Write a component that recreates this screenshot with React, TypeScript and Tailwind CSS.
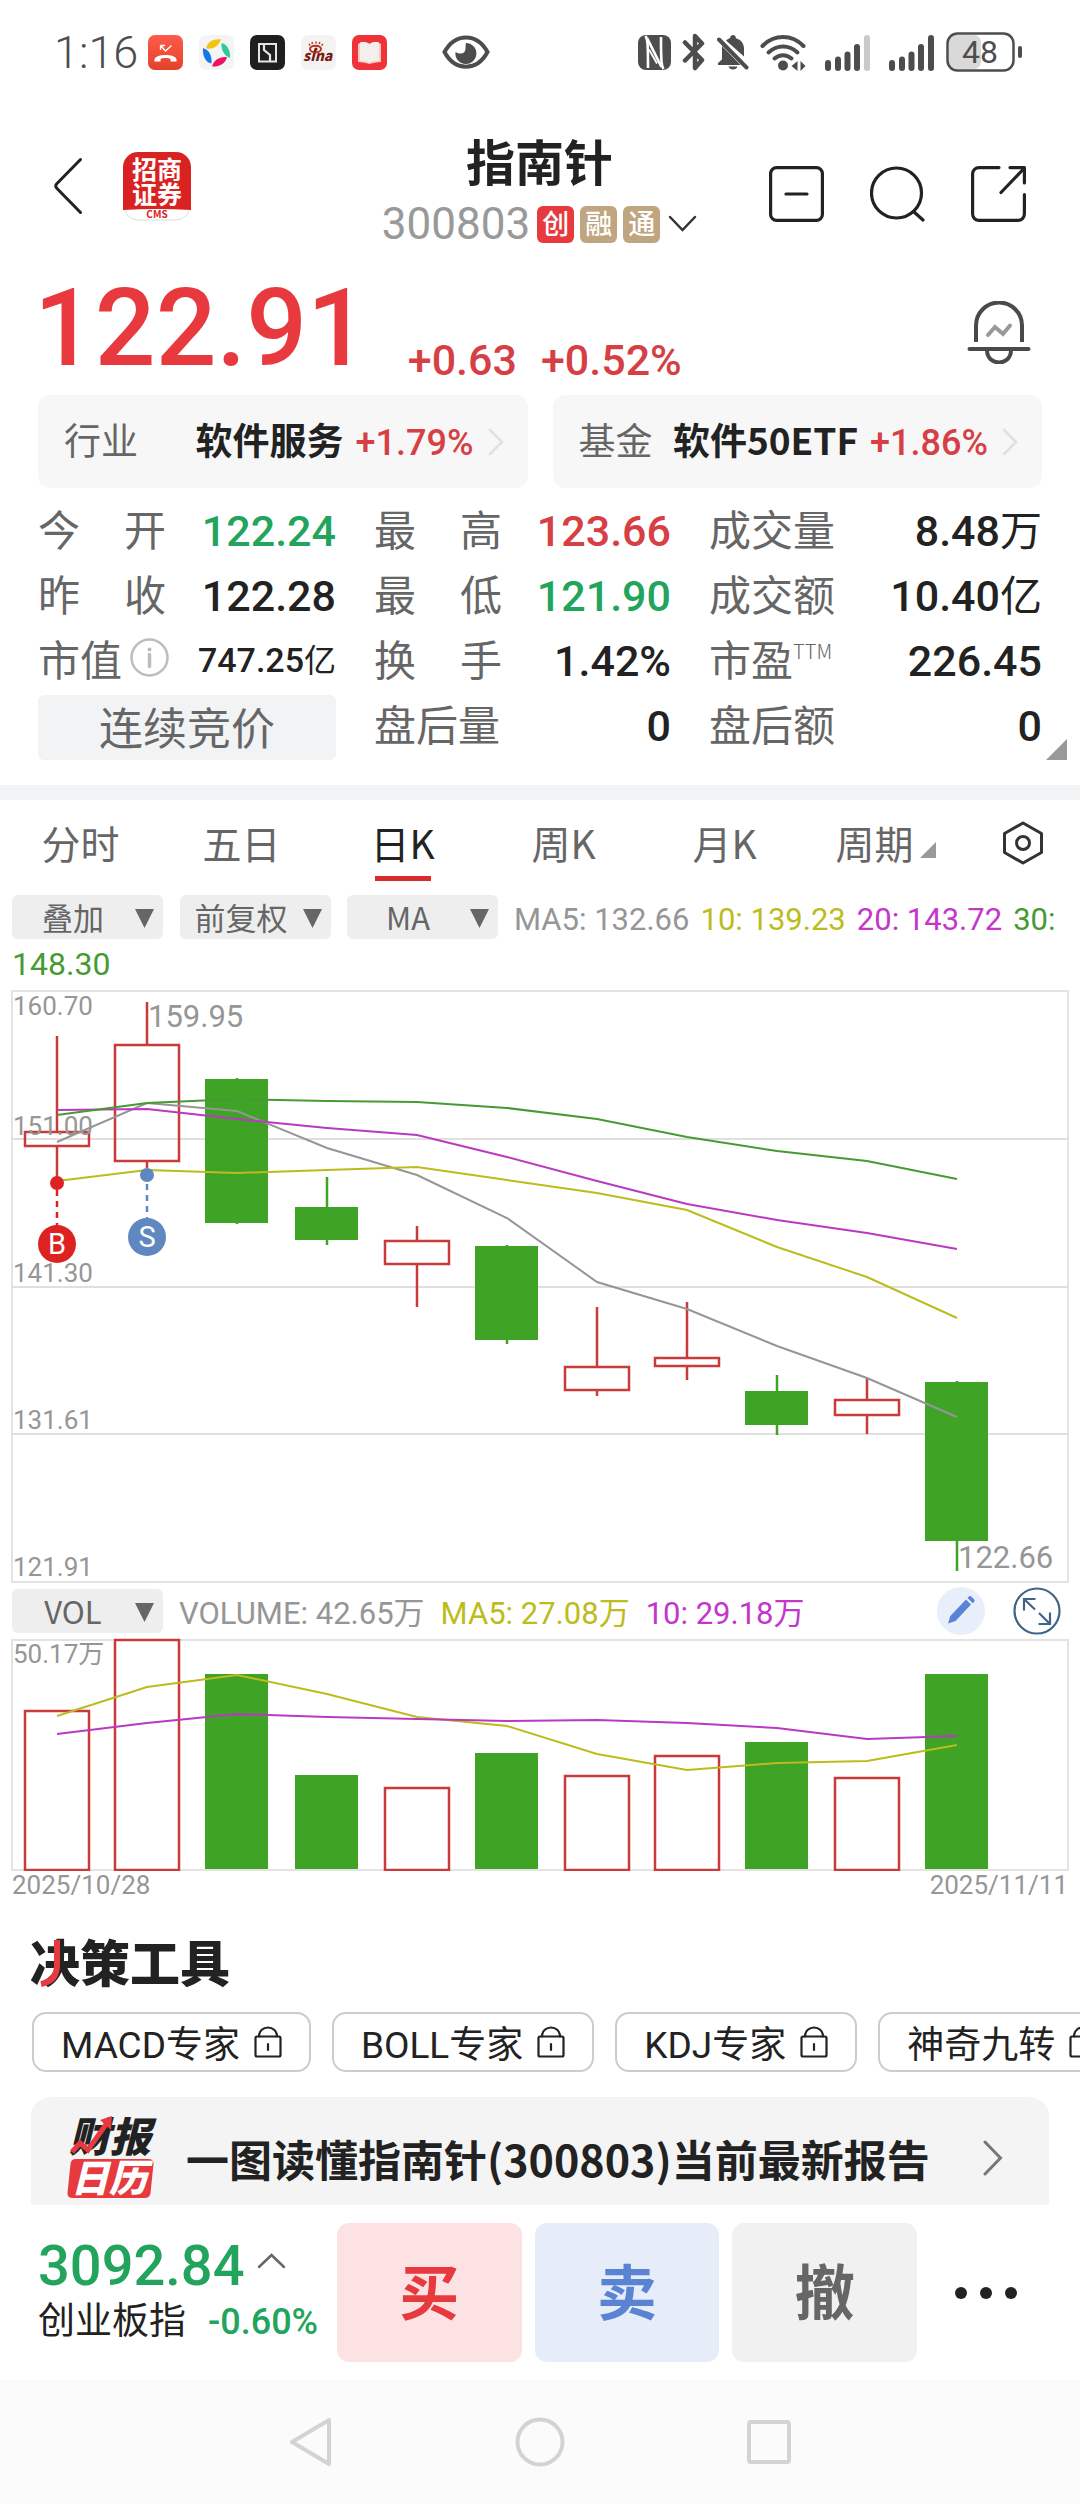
import React from "react";

const RED = "#c93a3a";
const GREEN = "#3fa326";

/* Latin digits set in Roboto on the baseline of the surrounding text. */
function N({ children }: { children: React.ReactNode }) {
  return <span className="font-[family-name:Roboto,'Noto_Sans_CJK_SC',sans-serif] leading-[0]">{children}</span>;
}

/* ---------- status bar ---------- */

function MissedCallIcon() {
  return (
    <svg width="35" height="35" viewBox="0 0 35 35" fill="none">
      <defs>
        <linearGradient id="call" x1="0" y1="0" x2="0" y2="1">
          <stop offset="0" stopColor="#ff5a4a" />
          <stop offset="1" stopColor="#e2432b" />
        </linearGradient>
      </defs>
      <rect width="35" height="35" rx="7" fill="url(#call)" />
      <path d="M12.5 10.5v4.5M12.5 10.5h4.500M13 11l4.500 5 6-5.500" stroke="#fff" strokeWidth="1.300" />
      <path d="M6.500 26.500v-2.200c1.500-5.600 20.500-5.600 22 0v2.200h-6v-2.500c-2.500-1.300-7.500-1.300-10 0v2.500z" fill="#fff" />
    </svg>
  );
}

function PinwheelIcon() {
  return (
    <svg width="35" height="35" viewBox="0 0 35 35">
      <rect width="35" height="35" rx="7" fill="#f4f4f5" />
      <path d="M7 13.500C9 6 15 3.500 22 4.500 20 10 16 14.500 7 13.500z" fill="#f2c40f" />
      <path d="M22.500 8c6.500 1.500 9 8.500 8.500 15C26 21 22 16 22.500 8z" fill="#2fc99b" />
      <path d="M28 22c-1.500 7-8.500 10-15 9.500C14.500 26 19 21.500 28 22z" fill="#ee1166" />
      <path d="M4 13c6 2 9 7 8.500 15.500C5.500 27 3.500 20 4 13z" fill="#1277e8" />
    </svg>
  );
}

function GateIcon() {
  return (
    <svg width="35" height="35" viewBox="0 0 35 35" fill="none">
      <rect width="35" height="35" rx="7" fill="#1f1f1f" />
      <rect x="9" y="9" width="17" height="17.500" stroke="#e6e6e6" strokeWidth="2" />
      <path d="M14 9v6l6 5v6.500" stroke="#e6e6e6" strokeWidth="2.200" />
    </svg>
  );
}

function SinaIcon() {
  return (
    <svg width="35" height="35" viewBox="0 0 35 35" fill="none">
      <rect width="35" height="35" rx="7" fill="#f3f3f3" />
      <ellipse cx="14.500" cy="14" rx="5.500" ry="3.300" stroke="#b5321f" strokeWidth="2" />
      <circle cx="15" cy="14" r="1.600" fill="#7a1d14" />
      <path d="M9 10.500l-1-1.500M11.500 9l-.5-2M15 8.500V6.500M18 9l1-2M20.500 10.500l1.500-1.500" stroke="#c23a25" strokeWidth="1.500" />
      <text x="2" y="26" fontSize="14" fontWeight="900" fontStyle="italic" fill="#7a1d14">sina</text>
    </svg>
  );
}

function BookIcon() {
  return (
    <svg width="35" height="35" viewBox="0 0 35 35">
      <rect width="35" height="35" rx="7" fill="#ee3438" />
      <path d="M6 9c4-2.500 8-2 11.500 0C21 7 25 6.500 29 9v18c-4 .5-8 .5-11.500 2-3.500-1.500-7.500-1.500-11.500-2z" fill="#f8c9c6" />
      <path d="M8 7.500c3.500-1 6.500-.5 9.500 1.500 3-2 6-2.500 9.500-1.500V26c-3.500 0-6.500.3-9.500 1.500C14.500 26.300 11.500 26 8 26z" fill="#f3efec" />
    </svg>
  );
}

function EyeIcon() {
  return (
    <svg width="48" height="34" viewBox="0 0 48 34" fill="none">
      <path d="M2.500 17C13-2.500 35-2.500 45.500 17 35 36.500 13 36.500 2.500 17z" stroke="#4d4d4d" strokeWidth="4" />
      <path d="M24 8a10.500 10.500 0 1 1-10.500 9c2 1.500 7.500 3 9.500-1 1.200-2.500 0-5 1-8z" fill="#4d4d4d" />
    </svg>
  );
}

function NfcIcon() {
  return (
    <svg width="33" height="35" viewBox="0 0 33 35" fill="none">
      <rect width="33" height="35" rx="8" fill="#4d4d4d" />
      <path d="M7.500 1C9.500 4 10 8 10 33M25.500 34C23.500 31 23 27 23 2" stroke="#fff" strokeWidth="2.600" />
      <path d="M9 3l14.500 29" stroke="#fff" strokeWidth="2.600" />
      <path d="M11 14.500l8 14" stroke="#fff" strokeWidth="1.800" />
    </svg>
  );
}

function BluetoothIcon() {
  return (
    <svg width="24" height="38" viewBox="0 0 24 38" fill="none" stroke="#4d4d4d" strokeWidth="4.500" strokeLinecap="round" strokeLinejoin="round">
      <path d="M3 9.500L20 27l-7 8V3l7 7.500L3 27.500" />
    </svg>
  );
}

function MutedBellIcon() {
  return (
    <svg width="32" height="36" viewBox="0 0 32 36">
      <path d="M5 12l18.500 19H1v-2l4-3.500V12zM9 6.500c1-1 2.500-2 4-2.300C13.300 2 14.500 1 16 1s2.700 1 3 3.200c5 1.500 8 5.300 8 10.300v8L9 6.500z" fill="#4d4d4d" />
      <path d="M11.500 32.500h9c-1 4-8 4-9 0z" fill="#4d4d4d" />
      <path d="M2 5.500l27.500 28" stroke="#4d4d4d" strokeWidth="4" strokeLinecap="round" />
    </svg>
  );
}

function WifiIcon() {
  return (
    <svg width="46" height="37" viewBox="0 0 46 37" fill="none">
      <g stroke="#4d4d4d" strokeWidth="4" strokeLinecap="round">
        <path d="M2.500 12C14 0 32 0 43.500 12" />
        <path d="M8.500 18.500c8.500-8 20.500-8 29 0" />
        <path d="M14.500 24.500c5-4.500 12-4.500 17 0" />
      </g>
      <circle cx="23" cy="31.500" r="5" fill="#4d4d4d" />
      <path d="M31.500 32l6-5v10zM45.500 32l-5-5v10z" fill="#4d4d4d" />
    </svg>
  );
}

function SignalIcon({ last }: { last: string }) {
  return (
    <svg width="46" height="37" viewBox="0 0 46 37" fill="#4d4d4d">
      <rect x="0" y="26" width="6" height="11" rx="3" />
      <rect x="10" y="22.500" width="6" height="14.500" rx="3" />
      <rect x="19.500" y="17.500" width="6" height="19.500" rx="3" />
      <rect x="29" y="10" width="6" height="27" rx="3" />
      <rect x="39" y="1" width="6" height="36" rx="3" fill={last} />
    </svg>
  );
}

function BatteryIcon() {
  return (
    <svg className="overflow-visible font-[family-name:Roboto,sans-serif]" width="78" height="40" viewBox="0 0 78 40" fill="none">
      <rect x="3" y="3" width="32" height="34" rx="7" fill="#d9d9d9" />
      <rect x="1.500" y="1.500" width="66" height="37" rx="10" stroke="#4d4d4d" strokeWidth="2.500" />
      <rect x="72" y="14" width="4" height="12" rx="2" fill="#4d4d4d" />
      <text x="34" y="31" textAnchor="middle" fontSize="32" fill="#4d4d4d">48</text>
    </svg>
  );
}

function StatusBar() {
  return (
    <div className="flex h-[104px] items-center pr-[56px] pl-[54px] text-[#4d4d4d]">
      <span className="w-[94px] font-[family-name:Roboto,sans-serif] text-[45px] leading-none font-light">1:16</span>
      <div className="flex gap-4">
        <MissedCallIcon />
        <PinwheelIcon />
        <GateIcon />
        <SinaIcon />
        <BookIcon />
      </div>
      <div className="ml-[55px]"><EyeIcon /></div>
      <div className="ml-auto flex items-center gap-[11px]">
        <NfcIcon />
        <BluetoothIcon />
        <MutedBellIcon />
        <WifiIcon />
        <div className="ml-2 flex gap-[18px]">
          <SignalIcon last="#c9c9c9" />
          <SignalIcon last="#4d4d4d" />
        </div>
        <BatteryIcon />
      </div>
    </div>
  );
}

/* ---------- header ---------- */

function BrokerLogo() {
  return (
    <svg className="overflow-visible" width="68" height="69" viewBox="0 0 68 69">
      <rect x="1" y="1" width="66" height="67" rx="14" fill="#fff" stroke="#ddd" />
      <path d="M0 58V15A15 15 0 0 1 15 0h38a15 15 0 0 1 15 15v43q-34-2-68 0z" fill="#d92322" />
      <text x="34" y="27" textAnchor="middle" fontSize="25" fontWeight="700" fill="#fff">招商</text>
      <text x="34" y="52" textAnchor="middle" fontSize="25" fontWeight="700" fill="#fff">证券</text>
      <text x="34" y="66" textAnchor="middle" fontSize="10" fontWeight="700" fill="#d92322">CMS</text>
    </svg>
  );
}

function Header() {
  return (
    <header className="grid grid-cols-[1fr_auto_1fr] pt-[26px] pr-[54px] pl-[53px]">
      <div className="flex items-center gap-10 pb-4">
        <button aria-label="返回">
          <svg width="30" height="58" viewBox="0 0 30 58" fill="none" stroke="#222" strokeWidth="3" strokeLinecap="round">
            <path d="M27.500 2.500L4 26.500q-2.500 2.500 0 5l23.500 24" />
          </svg>
        </button>
        <BrokerLogo />
      </div>
      <div className="flex flex-col items-center">
        <h1 className="text-[49px] leading-[60px] font-bold text-[#222]">指南针</h1>
        <button className="flex h-[68px] items-center gap-[6px]">
          <span className="mr-px font-[family-name:Roboto,sans-serif] text-[44px] leading-none text-[#999]">300803</span>
          <span className="h-[37px] w-[37px] rounded-md bg-[#e63a3f] text-center text-[27px] leading-[34px] font-medium text-white">创</span>
          <span className="h-[37px] w-[37px] rounded-md bg-[#bfa580] text-center text-[27px] leading-[34px] font-medium text-white">融</span>
          <span className="h-[37px] w-[37px] rounded-md bg-[#bfa580] text-center text-[27px] leading-[34px] font-medium text-white">通</span>
          <svg className="ml-[2px]" width="29" height="18" viewBox="0 0 29 18" fill="none" stroke="#333" strokeWidth="2.500" strokeLinecap="round">
            <path d="M2 2l12.500 13L27 2" />
          </svg>
        </button>
      </div>
      <div className="flex items-center justify-end gap-[46px]">
        <button aria-label="移除自选">
          <svg width="55" height="56" viewBox="0 0 55 56" fill="none" stroke="#222" strokeWidth="3.200" strokeLinecap="round">
            <rect x="1.600" y="1.600" width="51.800" height="52.800" rx="6" />
            <path d="M17 28h21" />
          </svg>
        </button>
        <button aria-label="搜索">
          <svg width="55" height="56" viewBox="0 0 55 56" fill="none" stroke="#222" strokeWidth="3.200" strokeLinecap="round">
            <circle cx="26.500" cy="27" r="25" />
            <path d="M43.500 45.500l9.500 8.500" />
          </svg>
        </button>
        <button aria-label="分享">
          <svg width="55" height="56" viewBox="0 0 55 56" fill="none" stroke="#222" strokeWidth="3.200" strokeLinecap="round" strokeLinejoin="round">
            <path d="M28 1.600H8a6.400 6.400 0 0 0-6.400 6.400v40a6.400 6.400 0 0 0 6.400 6.400h39a6.400 6.400 0 0 0 6.400-6.400V28.500M39 1.600h14.400V17M52.500 3L30 26.500" />
          </svg>
        </button>
      </div>
    </header>
  );
}

function PriceRow() {
  return (
    <section className="flex items-end pr-[49px] pl-[34px]">
      <span className="text-[107px] leading-[122px] font-medium text-[#e8393f]"><N>122.91</N></span>
      <span className="ml-10 text-[43px] leading-[48px] font-medium text-[#d64045]"><N>+0.63</N></span>
      <span className="ml-6 text-[43px] leading-[48px] font-medium text-[#d64045]"><N>+0.52%</N></span>
      <button className="mb-4 ml-auto" aria-label="股价提醒">
        <svg width="64" height="63" viewBox="0 0 64 63" fill="none" stroke="#4a4a4a" strokeWidth="4" strokeLinecap="round">
          <path d="M9 41V24.500a23 23 0 0 1 46 0V41" strokeLinecap="butt" />
          <path d="M2.500 48h59" />
          <path d="M20 49.500c.5 16 23.500 16 24 0" />
          <path d="M21 34l7-8 8 7 7-8.500" stroke="#999" />
        </svg>
      </button>
    </section>
  );
}

function Chevron() {
  return (
    <svg width="16" height="28" viewBox="0 0 16 28" fill="none" stroke="#e0e0e0" strokeWidth="2.500" strokeLinecap="round">
      <path d="M2 2l12 12L2 26" />
    </svg>
  );
}

function SectorCard({ label, name, change }: { label: string; name: string; change: string }) {
  return (
    <a href="#sector" className="flex h-[93px] items-center rounded-xl bg-[#f7f7f7] pr-6 pb-[6px] pl-[26px] whitespace-nowrap">
      <span className="text-[37px] leading-[54px] text-[#666]">{label}</span>
      <span className="ml-auto text-[37px] leading-[54px] font-bold text-[#222]">{name}</span>
      <span className="ml-3 text-[36px] leading-[54px] font-medium text-[#d64045]"><N>{change}</N></span>
      <span className="mt-[6px] ml-[14px]"><Chevron /></span>
    </a>
  );
}

type StatProps = { label: React.ReactNode; value: string; unit?: string; tone?: string; small?: boolean };

function Stat({ label, value, unit, tone = "text-[#222]", small = false }: StatProps) {
  return (
    <div className={`${tone} flex h-[65px] items-center justify-between whitespace-nowrap`}>
      <dt className="flex w-[128px] items-center justify-between text-[42px] leading-none text-[#666]">{label}</dt>
      <dd className={small ? "text-[34px] leading-none font-medium" : "text-[43px] leading-none font-medium"}>
        <N>{value}</N>
        {unit && <span className={small ? "text-[32px] leading-[0] font-normal" : "text-[42px] leading-[0] font-normal"}>{unit}</span>}
      </dd>
    </div>
  );
}

function Spread({ text }: { text: string }) {
  return (
    <>
      {text.split("").map((c, i) => (
        <span key={i}>{c}</span>
      ))}
    </>
  );
}

function Stats() {
  return (
    <section className="relative mt-[7px] px-[38px] pb-[25px]">
      <dl className="grid grid-cols-[298fr_297fr_333fr] items-start gap-x-[38px]">
        <Stat label={<Spread text="今开" />} value="122.24" tone="text-[#22a45d]" />
        <Stat label={<Spread text="最高" />} value="123.66" tone="text-[#d64045]" />
        <Stat label="成交量" value="8.48" unit="万" />
        <Stat label={<Spread text="昨收" />} value="122.28" />
        <Stat label={<Spread text="最低" />} value="121.90" tone="text-[#22a45d]" />
        <Stat label="成交额" value="10.40" unit="亿" />
        <Stat
          label={
            <>
              市值
              <svg className="ml-2 shrink-0" width="39" height="39" viewBox="0 0 39 39" fill="none" stroke="#bdbdbd">
                <circle cx="19.500" cy="19.500" r="18" strokeWidth="2.500" />
                <path d="M19.500 16.500V28.500" strokeWidth="3.500" strokeLinecap="round" />
                <circle cx="19.500" cy="11.500" r="2" fill="#bdbdbd" stroke="none" />
              </svg>
            </>
          }
          value="747.25"
          unit="亿"
          small
        />
        <Stat label={<Spread text="换手" />} value="1.42%" />
        <Stat
          label={
            <span className="flex">
              市盈<span className="text-[20px] leading-[28px] font-light">TTM</span>
            </span>
          }
          value="226.45"
        />
        <div className="mt-[5px] h-[65px] rounded-md bg-[#f2f3f5] text-center text-[44px] leading-[62px] text-[#666]">连续竞价</div>
        <Stat label="盘后量" value="0" />
        <Stat label="盘后额" value="0" />
      </dl>
      <svg className="absolute right-[13px] bottom-[25px]" width="21" height="21" viewBox="0 0 21 21">
        <path d="M21 0v21H0z" fill="#999" />
      </svg>
    </section>
  );
}

/* ---------- chart ---------- */

function PeriodTabs() {
  const tabs = ["分时", "五日", "日K", "周K", "月K"];
  return (
    <nav className="flex h-[81px] items-center text-[39px] leading-none text-[#666]">
      {tabs.map((t) => (
        <button key={t} className={t === "日K" ? "relative h-full flex-1 pt-[3px] text-[#222]" : "relative h-full flex-1 pt-[3px]"}>
          {t}
          {t === "日K" && <span className="absolute bottom-0 left-1/2 h-[5px] w-14 -translate-x-1/2 bg-[#d92b2b]" />}
        </button>
      ))}
      <button className="flex h-full flex-1 items-center justify-center gap-[6px] pt-[3px]">
        周期
        <svg className="mt-4" width="16" height="16" viewBox="0 0 16 16">
          <path d="M16 0v16H0z" fill="#999" />
        </svg>
      </button>
      <button className="flex h-full w-[114px] items-center justify-center pt-[5px]" aria-label="图表设置">
        <svg width="42" height="44" viewBox="0 0 42 44" fill="none" stroke="#333" strokeWidth="3" strokeLinejoin="round">
          <path d="M21 2l18.500 10.500v19L21 42 2.500 31.500v-19z" />
          <circle cx="21" cy="22" r="6.500" />
        </svg>
      </button>
    </nav>
  );
}

function Picker({ label, value }: { label: string; value: string }) {
  return (
    <div className="relative h-11 w-[151px] shrink-0">
      <select aria-label={label} defaultValue={value} className="h-11 w-full appearance-none rounded-md bg-[#eee] pr-[29px] text-center text-[31px] leading-[44px] text-[#666]">
        <option value={value}>{value}</option>
      </select>
      <svg className="pointer-events-none absolute top-[14px] right-[9px]" width="19" height="19" viewBox="0 0 19 19">
        <path d="M0 0h19l-9.500 19z" fill="#666" />
      </svg>
    </div>
  );
}

type Candle = { up: boolean; high: number; top: number; bottom: number; low: number };

const candles: Candle[] = [
  { up: true, high: 46, top: 142, bottom: 156, low: 193 },
  { up: true, high: 12, top: 55, bottom: 171, low: 178 },
  { up: false, high: 88, top: 89, bottom: 233, low: 234 },
  { up: false, high: 187, top: 217, bottom: 250, low: 255 },
  { up: true, high: 236, top: 251, bottom: 274, low: 317 },
  { up: false, high: 255, top: 256, bottom: 350, low: 354 },
  { up: true, high: 317, top: 377, bottom: 400, low: 406 },
  { up: true, high: 312, top: 368, bottom: 376, low: 390 },
  { up: false, high: 385, top: 401, bottom: 435, low: 445 },
  { up: true, high: 388, top: 410, bottom: 425, low: 444 },
  { up: false, high: 391, top: 392, bottom: 551, low: 581 },
];

const priceLines = [
  { color: "#969696", y: [152, 113, 121, 158, 185, 228, 292, 319, 356, 388, 427] },
  { color: "#bcbc1c", y: [191, 180, 183, 180, 177, 190, 203, 220, 257, 287, 328] },
  { color: "#b93ac0", y: [120, 119, 129, 138, 145, 167, 191, 214, 230, 243, 259] },
  { color: "#479a33", y: [125, 113, 109, 111, 112, 118, 129, 147, 161, 171, 189] },
];

const volumes = [71, 0, 34, 135, 148, 113, 136, 116, 102, 138, 34];

const volumeLines = [
  { color: "#bcbc1c", y: [76, 47, 35, 54, 77, 86, 114, 130, 123, 121, 105] },
  { color: "#b93ac0", y: [94, 83, 74, 77, 79, 81, 80, 83, 88, 99, 96] },
];

const cx = (i: number) => 57 + i * 90;

function Line({ color, y }: { color: string; y: number[] }) {
  return <polyline points={y.map((v, i) => `${cx(i)},${v}`).join(" ")} fill="none" stroke={color} strokeWidth="2" />;
}

function PriceChart() {
  return (
    <svg className="block w-full font-[family-name:Roboto,'Noto_Sans_CJK_SC',sans-serif]" viewBox="0 -9 1080 608">
      <rect x="12" y="1" width="1056" height="591" fill="none" stroke="#e3e3e3" strokeWidth="2" />
      {[149, 297, 444].map((y) => (
        <path key={y} d={`M12 ${y}H1068`} stroke="#d6d6d6" strokeWidth="1.500" />
      ))}
      {candles.map((c, i) =>
        c.up ? (
          <g key={i} stroke={RED} fill="none">
            <path d={`M${cx(i)} ${c.high}V${c.top}M${cx(i)} ${c.bottom}V${c.low}`} strokeWidth="2.500" />
            <rect x={cx(i) - 32} y={c.top} width="64" height={c.bottom - c.top} strokeWidth="2.500" />
          </g>
        ) : (
          <g key={i}>
            <path d={`M${cx(i)} ${c.high}V${c.low}`} stroke={GREEN} strokeWidth="2.500" />
            <rect x={cx(i) - 32} y={c.top} width="63" height={c.bottom - c.top} fill={GREEN} />
          </g>
        )
      )}
      {priceLines.map((l) => (
        <Line key={l.color} {...l} />
      ))}
      <g fill="#969696" fontSize="26">
        <text x="13" y="25">160.70</text>
        <text x="13" y="145">151.00</text>
        <text x="13" y="292">141.30</text>
        <text x="13" y="439">131.61</text>
        <text x="13" y="586">121.91</text>
      </g>
      <g fill="#969696" fontSize="31">
        <text x="148" y="37">159.95</text>
        <text x="958" y="578">122.66</text>
      </g>
      <path d="M57 200V236" stroke="#dd2222" strokeWidth="2.500" strokeDasharray="6 5" />
      <circle cx="57" cy="193" r="7" fill="#dd2222" />
      <circle cx="57" cy="254" r="19" fill="#dd2222" />
      <text x="57" y="264" textAnchor="middle" fontSize="29" fill="#fff">B</text>
      <path d="M147 194V228" stroke="#5f87c0" strokeWidth="2.500" strokeDasharray="6 5" />
      <circle cx="147" cy="185" r="7" fill="#5f87c0" />
      <circle cx="147" cy="247" r="19" fill="#5f87c0" />
      <text x="147" y="257" textAnchor="middle" fontSize="29" fill="#fff">S</text>
    </svg>
  );
}

function VolumeChart() {
  return (
    <svg className="block w-full font-[family-name:Roboto,'Noto_Sans_CJK_SC',sans-serif]" viewBox="0 -7 1080 238">
      <rect x="12" y="0" width="1056" height="230" fill="none" stroke="#e3e3e3" strokeWidth="2" />
      {volumes.map((top, i) =>
        candles[i].up ? (
          <rect key={i} x={cx(i) - 32} y={top} width="64" height={230 - top} fill="none" stroke={RED} strokeWidth="2.500" />
        ) : (
          <rect key={i} x={cx(i) - 32} y={top} width="63" height={229 - top} fill={GREEN} />
        )
      )}
      {volumeLines.map((l) => (
        <Line key={l.color} {...l} />
      ))}
      <text x="13" y="23" fontSize="26" fill="#969696">50.17万</text>
    </svg>
  );
}

function ChartSection() {
  return (
    <section>
      <div className="mt-[14px] flex items-center pl-3 text-[31px] leading-[44px] whitespace-nowrap">
        <Picker label="叠加" value="叠加" />
        <div className="ml-[17px]"><Picker label="复权方式" value="前复权" /></div>
        <div className="ml-4"><Picker label="主图指标" value="MA" /></div>
        <div className="ml-4 flex gap-[11px]">
          <span className="text-[#969696]"><N>MA5: 132.66</N></span>
          <span className="text-[#bcbc1c]"><N>10: 139.23</N></span>
          <span className="text-[#c437c9]"><N>20: 143.72</N></span>
          <span className="text-[#479a33]"><N>30:</N></span>
        </div>
      </div>
      <div className="mt-[2px] pl-3 text-[32px] leading-[40px] text-[#479a33]"><N>148.30</N></div>
      <PriceChart />
      <div className="flex h-11 items-center pr-[19px] pl-3 text-[31px] leading-[44px] whitespace-nowrap">
        <Picker label="副图指标" value="VOL" />
        <div className="ml-4 flex gap-4">
          <span className="text-[#969696]"><N>VOLUME: 42.65万</N></span>
          <span className="text-[#bcbc1c]"><N>MA5: 27.08万</N></span>
          <span className="text-[#c437c9]"><N>10: 29.18万</N></span>
        </div>
        <button className="ml-auto" aria-label="画线">
          <svg width="48" height="48" viewBox="0 0 48 48">
            <circle cx="24" cy="24" r="24" fill="#e9effa" />
            <path d="M11 36.500l2.300-7.500L29 12.500l5 5L18.500 34zM30.500 11l1.200-1.300c.8-.8 2-.8 2.800 0l2.500 2.500c.8.8.8 2 0 2.800L35.800 16.300z" fill="#5a82d6" />
          </svg>
        </button>
        <button className="ml-7" aria-label="全屏">
          <svg width="48" height="48" viewBox="0 0 48 48" fill="none" stroke="#3f6488" strokeWidth="2.200">
            <circle cx="24" cy="24" r="22.500" />
            <path d="M22.500 12H11v11.500M11 12l11 10.500M26 26l10.500 10.500M25.500 37H37V25.500" />
          </svg>
        </button>
      </div>
      <VolumeChart />
      <div className="flex justify-between px-3 text-[26px] leading-6 text-[#969696]">
        <span><N>2025/10/28</N></span>
        <span><N>2025/11/11</N></span>
      </div>
    </section>
  );
}

/* ---------- tools ---------- */

function LockIcon() {
  return (
    <svg width="28" height="32" viewBox="0 0 28 32" fill="none" stroke="#222" strokeWidth="2.200" strokeLinecap="round">
      <rect x="1.500" y="10.500" width="25" height="20" rx="1.500" />
      <path d="M5 10.500c0-12 18-12 18 0" />
      <path d="M14 18v6" />
    </svg>
  );
}

function Tools() {
  return (
    <section className="mt-[35px]">
      <h2 className="relative ml-[30px] w-fit text-[50px] leading-[60px] font-black text-[#222]">
        决策工具
        <svg className="absolute top-[9px] left-0" width="50" height="50" viewBox="0 0 50 50" fill="none">
          <path d="M27 1v25q0 16-16 19" stroke="#e63a3f" strokeWidth="6" />
        </svg>
      </h2>
      <div className="mt-[22px] flex gap-[21px] overflow-hidden pl-8">
        {["MACD专家", "BOLL专家", "KDJ专家", "神奇九转"].map((t) => (
          <button key={t} className="flex h-[60px] shrink-0 items-center gap-[14px] rounded-[14px] border-2 border-[#ccc] px-[27px] text-[37px] leading-[56px] text-[#222]">
            <span><N>{t}</N></span>
            <LockIcon />
          </button>
        ))}
      </div>
      <a href="#report" className="mx-[31px] mt-[25px] flex h-[108px] items-center rounded-t-[20px] bg-[#f4f4f4] pt-[13px] pr-[46px] pl-[36px]">
        <svg className="overflow-visible" width="90" height="84" viewBox="0 0 90 84" fill="none">
          <g fontStyle="italic" fontWeight="900">
            <text x="2" y="36" fontSize="41" fill="#222">财报</text>
            <path d="M9 43h72q6 0 5.500 5l-3 29q-.5 5-6 5H6q-6 0-5.500-5L3.500 48q.5-5 5.500-5z" fill="#e63a3f" />
            <text x="4" y="76" fontSize="38" fill="#fff">日历</text>
          </g>
          <path d="M5 36l8-9 8 7L40 7" stroke="#e63a3f" strokeWidth="5" />
          <path d="M33 4l12-4-1 14z" fill="#e63a3f" />
        </svg>
        <span className="ml-[29px] text-[43px] leading-[60px] font-bold whitespace-nowrap text-[#222]">一图读懂指南针(300803)当前最新报告</span>
        <svg className="ml-auto" width="20" height="36" viewBox="0 0 20 36" fill="none" stroke="#777" strokeWidth="3" strokeLinecap="round">
          <path d="M2 2l15.500 16L2 34" />
        </svg>
      </a>
    </section>
  );
}

function TradeBar() {
  return (
    <footer className="flex items-center py-[18px] pr-[62px] pl-[38px] whitespace-nowrap">
      <a href="#index" className="w-[299px] shrink-0 pb-4">
        <span className="flex items-center gap-3 text-[56px] leading-[66px] font-medium text-[#22a45d]">
          <span><N>3092.84</N></span>
          <svg width="29" height="16" viewBox="0 0 29 16" fill="none" stroke="#666" strokeWidth="2.500" strokeLinecap="round">
            <path d="M2 14L14.500 2 27 14" />
          </svg>
        </span>
        <span className="flex items-center gap-[22px] text-[37px] leading-[48px] text-[#222]">
          创业板指<span className="text-[36px] font-medium text-[#22a45d]"><N>-0.60%</N></span>
        </span>
      </a>
      <div className="grid flex-1 grid-cols-3 gap-[13px] text-[60px] leading-none font-bold">
        <button className="h-[139px] rounded-xl bg-[#fde2e3] pb-2 text-[#e63a3f]">买</button>
        <button className="h-[139px] rounded-xl bg-[#e6edf9] pb-2 text-[#5a84d3]">卖</button>
        <button className="h-[139px] rounded-xl bg-[#f1f1f1] pb-2 text-[#666]">撤</button>
      </div>
      <button className="ml-[37px]" aria-label="更多">
        <svg width="64" height="14" viewBox="0 0 64 14" fill="#222">
          <circle cx="7" cy="7" r="6" />
          <circle cx="32" cy="7" r="6" />
          <circle cx="57" cy="7" r="6" />
        </svg>
      </button>
    </footer>
  );
}

function SystemNav() {
  return (
    <nav className="flex h-[124px] items-center justify-center gap-[180px] bg-[#fbfbfb]">
      <button aria-label="后退">
        <svg width="50" height="50" viewBox="0 0 50 50" fill="none" stroke="#d3d3d3" strokeWidth="4" strokeLinejoin="round">
          <path d="M44 3v44L7 25z" />
        </svg>
      </button>
      <button aria-label="主屏幕">
        <svg width="50" height="50" viewBox="0 0 50 50" fill="none" stroke="#d3d3d3" strokeWidth="4">
          <circle cx="25" cy="25" r="22.500" />
        </svg>
      </button>
      <button aria-label="最近任务">
        <svg width="50" height="50" viewBox="0 0 50 50" fill="none" stroke="#d3d3d3" strokeWidth="4">
          <rect x="4" y="5" width="40" height="40" rx="2" />
        </svg>
      </button>
    </nav>
  );
}

export default function App() {
  return (
    <main className="min-h-screen w-full overflow-hidden bg-white font-[family-name:'Noto_Sans_CJK_SC',sans-serif]">
      <StatusBar />
      <Header />
      <PriceRow />
      <section className="mt-[15px] grid grid-cols-2 gap-[25px] px-[38px]">
        <SectorCard label="行业" name="软件服务" change="+1.79%" />
        <SectorCard label="基金" name="软件50ETF" change="+1.86%" />
      </section>
      <Stats />
      <div className="h-[15px] bg-[#f2f3f5]" />
      <PeriodTabs />
      <ChartSection />
      <Tools />
      <TradeBar />
      <SystemNav />
    </main>
  );
}
